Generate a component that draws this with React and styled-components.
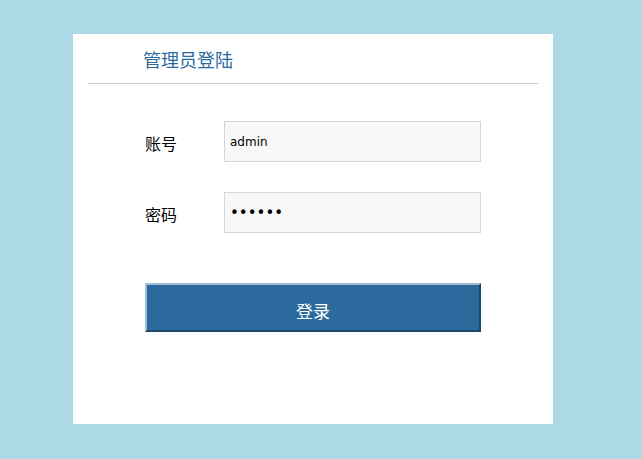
import styled, { createGlobalStyle } from "styled-components";

const GlobalStyle = createGlobalStyle`
    body{
        margin: 0;
        background-color: #add8e6;
        font-family: "Noto Sans CJK SC", "DejaVu Sans", sans-serif;
    }
`;

const App = ()=>{
    return(
        <Page>
            <GlobalStyle />
            <Card>
                <Header>
                    <Title>管理员登陆</Title>
                </Header>
                <Form>
                    <Row>
                        <Label>账号</Label>
                        <Input type="text" defaultValue="admin" />
                    </Row>
                    <Row>
                        <Label>密码</Label>
                        <Input type="password" defaultValue="123456" $secret />
                    </Row>
                    <Button>登录</Button>
                </Form>
            </Card>
        </Page>
    )
}

const Page = styled.div`
    padding: 34px 0 0 73px;
    height: 425px;
`;

const Card = styled.div`
    width: 480px;
    height: 390px;
    background-color: #fff;
`;

const Header = styled.div`
    margin: 0 15px;
    padding: 13px 0 11px 55px;
    border-bottom: 1px solid #cccccc;
`;

const Title = styled.div`
    font-size: 18px;
    line-height: 25px;
    color: #2b6aa0;
`;

const Form = styled.div`
    padding: 37px 0 0 72px;
    display: flex;
    flex-direction: column;
`;

const Row = styled.div`
    display: flex;
    align-items: center;
    margin-bottom: 30px;
`;

const Label = styled.label`
    width: 79px;
    font-size: 16px;
    color: #000;
    padding-top: 3px;
`;

const Input = styled.input`
    box-sizing: border-box;
    width: 257px;
    height: 41px;
    padding: 0 5px;
    background-color: #f8f8f8;
    border: 1px solid #d3d6da;
    font-family: "DejaVu Sans", sans-serif;
    font-size: ${props => props.$secret ? "15px" : "12px"};
    color: #000;
    outline: none;
`;

const Button = styled.button`
    box-sizing: border-box;
    margin-top: 20px;
    width: 336px;
    height: 49px;
    background-color: #2c6a9e;
    border-style: solid;
    border-width: 2px;
    border-color: #a3bdd3 #1d4767 #1d4767 #a3bdd3;
    color: #fff;
    font-family: "Noto Sans CJK SC", sans-serif;
    font-size: 17px;
    padding: 5px 0 0;
`;

export default App;
